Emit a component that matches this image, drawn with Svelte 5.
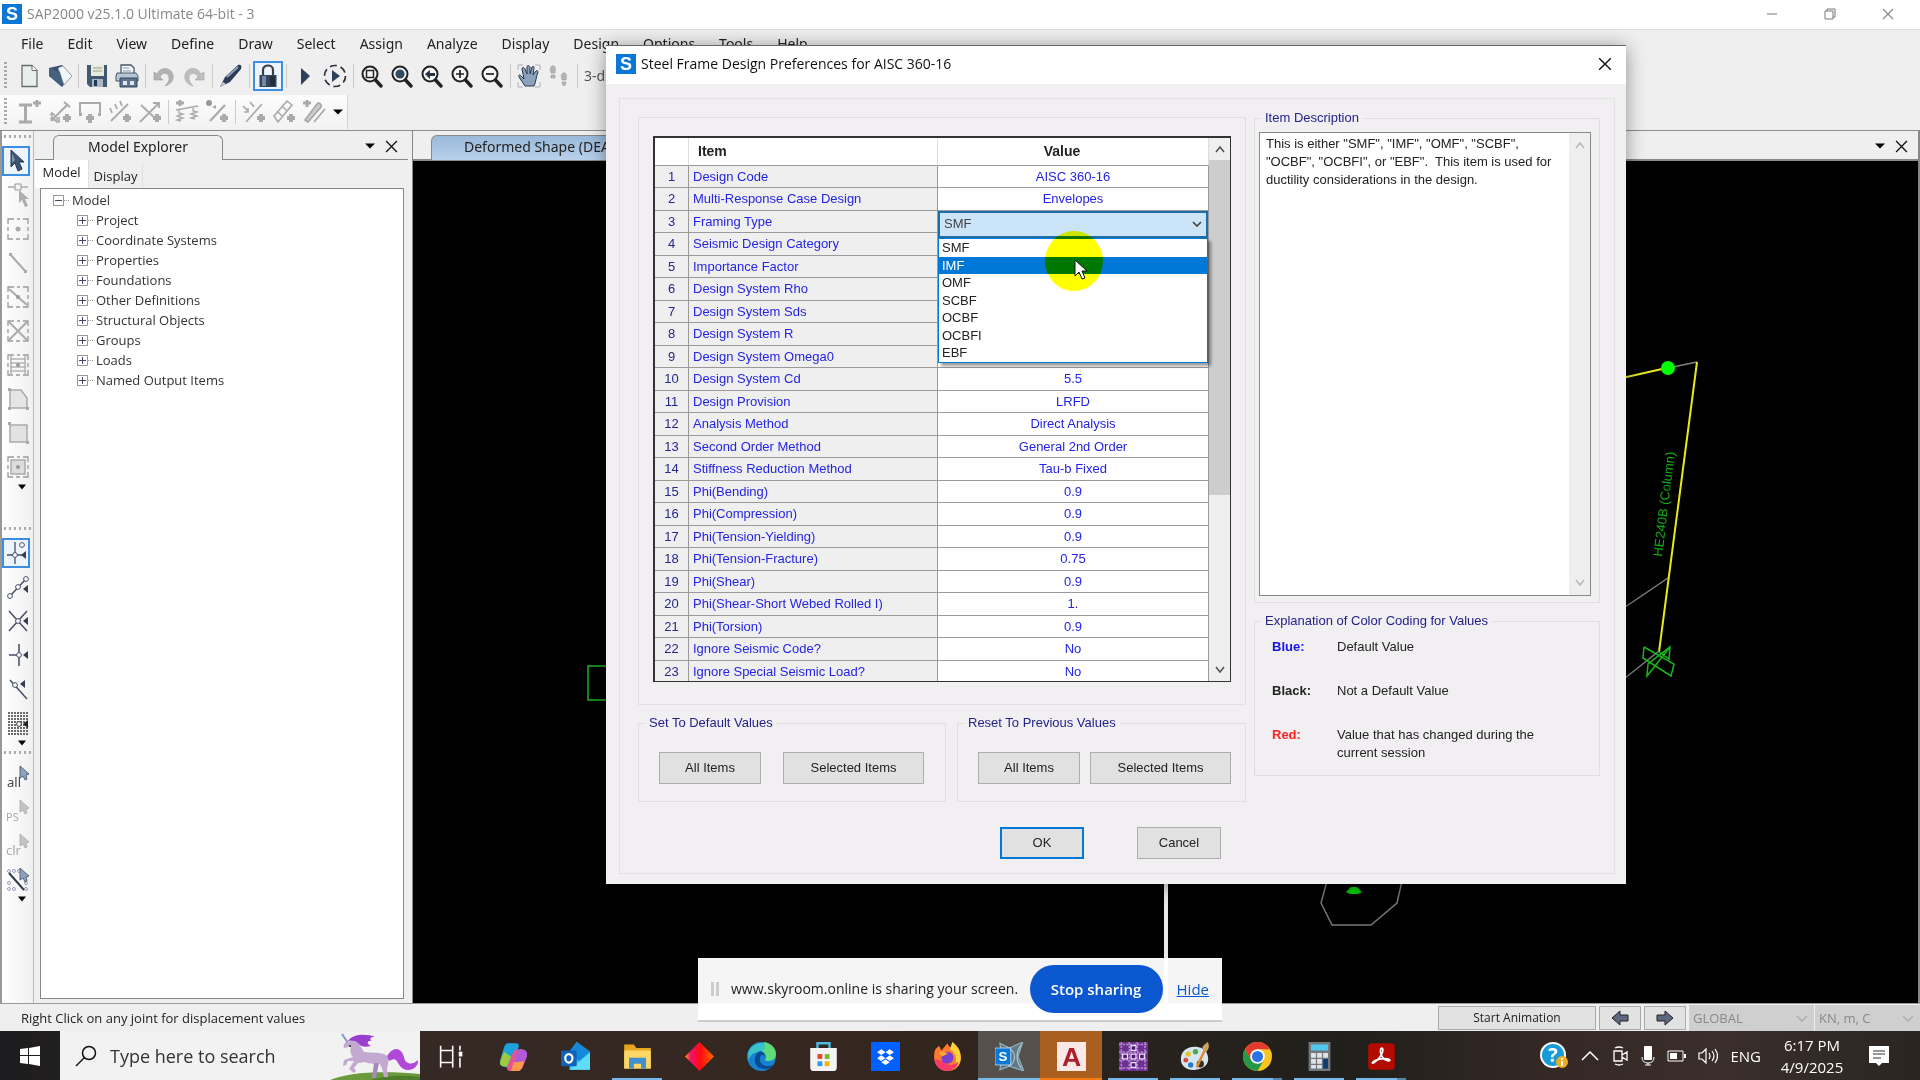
<script lang="ts">
	const menus = ['File', 'Edit', 'View', 'Define', 'Draw', 'Select', 'Assign', 'Analyze', 'Display', 'Design', 'Options', 'Tools', 'Help'];

	const glass = '<circle cx="10" cy="10" r="7.5" fill="#f4f6f8" stroke="#222" stroke-width="2"/><path d="M15.5 16l5.5 6" stroke="#222" stroke-width="3.4" stroke-linecap="round"/>';
	const dashed = '<path d="M2 7V2h6M11 2h3M17 2h5v5M22 10v4M22 17v5h-5M14 22h-4M7 22H2v-5M2 14v-4" fill="none" stroke="#9a9a9a" stroke-width="1.3"/>';
	const pad = '<path d="M19 14v8M15 18h8" stroke="#aaa" stroke-width="4"/>';
	const pick = '<path d="M14 1v12l3-2 2 4 2-1-1-4 3-1z" fill="#8fa3bc" stroke="#3c4d63" stroke-width=".8"/>';
	const pickOff = '<path d="M14 1v12l3-2 2 4 2-1-1-4 3-1z" fill="#c4c4c4" stroke="#aaa" stroke-width=".8"/>';

	const icons: Record<string, string> = {
		fresh: '<path d="M4 1.500h10l5 5v16H4z" fill="#e8eeea" stroke="#666f6b" stroke-width="1.300"/><path d="M14 1.500v5h5" fill="#fff" stroke="#666f6b"/>',
		open: '<path d="M1 4L14 1l10 11-10 11L1 12z" fill="#35506f"/><path d="M10 4l5-2 9 10-8 9z" fill="#f3f6f9" stroke="#7c8ba0" stroke-width=".7"/><path d="M1 4l11 4 3 14L1 12z" fill="#46617f"/>',
		save: '<path d="M2 1h20v22H5l-3-3z" fill="#405872"/><path d="M6 1h13v11H6z" fill="#e7ebdc"/><path d="M8 4h9M8 7h9" stroke="#96a08a"/><path d="M7 15h11v8H7z" fill="#a9b8c8"/><path d="M9 16h3v6H9z" fill="#22364d"/>',
		print: '<path d="M6 9V1h10l3 3v6" fill="#f4f7fa" stroke="#45566b" stroke-width="1.300"/><path d="M8 4h6M8 7h8" stroke="#8594a5"/><path d="M2 9h19l2 3v5H1v-5z" fill="#b9c5d2" stroke="#45566b"/><path d="M5 14h17v9H5z" fill="#5c7290" stroke="#34465c"/><path d="M8 17h4v4H8zM15 17h4v4h-4z" fill="#dfe6ee"/>',
		undo: '<path d="M2 8v8h9l-3-3c2-5 8-5 9 0 .6 3-1 6-4 9 6-2 9-6 8-11-2-8-12-9-16-1z" fill="#b3b3b3" stroke="#999" stroke-width=".6"/>',
		redo: '<path d="M22 8v8h-9l3-3c-2-5-8-5-9 0-.6 3 1 6 4 9-6-2-9-6-8-11C5 3 15 2 19 10z" fill="#bebebe" stroke="#a5a5a5" stroke-width=".6"/>',
		pen: '<path d="M1 23l5-10L19 1c3-1 4 1 3 4L11 18z" fill="#2c3c52"/><path d="M8 13L19 3" stroke="#91a5bc" stroke-width="1.800"/><path d="M1 23l3-5 3 2z" fill="#c5ccd6"/>',
		lock: '<path d="M7 12V6c0-6 10-6 10 0v6" fill="none" stroke="#3a4048" stroke-width="2.200"/><path d="M3.500 11h17v12h-17z" fill="#34445a"/><path d="M6 12h4v10H6z" fill="#7789a0"/><path d="M14 12h5v10h-5z" fill="#222e3f"/>',
		play: '<path d="M8 4l9 8-9 9z" fill="#2c4059"/>',
		runall: '<circle cx="12" cy="12" r="10.500" fill="none" stroke="#2b2f35" stroke-width="1.700" stroke-dasharray="7 4"/><path d="M9 6l8 6-8 6z" fill="#2c4059"/>',
		zoomwin: glass + '<path d="M6.500 6.500h7v7h-7z" fill="none" stroke="#222" stroke-width="1.500"/>',
		zoomfull: glass + '<circle cx="10" cy="10" r="4.600" fill="#35495f"/>',
		zoomback: glass + '<path d="M5 10l5-4v3h5v3h-5v3z" fill="#25313f"/>',
		zoomin: glass + '<path d="M6 10h8M10 6v8" stroke="#222" stroke-width="1.700"/>',
		zoomout: glass + '<path d="M6 10h8" stroke="#222" stroke-width="1.700"/>',
		pan: '<path d="M1 6V1h5M18 1h5v5M23 18v5h-5M6 23H1v-5" fill="none" stroke="#aab3bd"/><path d="M8 22l-6-9c-1-2 1-3 2-1l3 3L5 5c0-2 2-2 3 0l2 5V3c0-2 2-2 3 0v7l2-7c1-1 2-1 2 1l-1 7 3-4c1-1 2 0 2 1-2 5-2 10-4 14z" fill="#8ba1bd" stroke="#28384b"/>',
		walk: '<path d="M5 2c3-1 4 2 3 7H4C3 6 3 3 5 2zM4 11h4v3H4zM16 9c3-1 4 2 3 7h-4c-1-3-1-6 1-7zM15 18h4c0 5-4 5-4 0z" fill="#b5b5b5" stroke="#999" stroke-width=".6"/>',

		section: '<path d="M1 5h13M1 22h13M7.500 5v17" stroke="#aaa" stroke-width="3"/><path d="M19 0v7M15 3h8" stroke="#aaa" stroke-width="3"/>',
		released: '<path d="M3 21L20 4M16 2l6 5" fill="none" stroke="#aaa" stroke-width="2"/><path d="M2 15q3-3 5 1t5 1M2 19q3-3 5 1t5 1M4 12v8h8" fill="none" stroke="#aaa" stroke-width="1.500"/>' + pad,
		portal: '<path d="M2 14V3h20v11" fill="none" stroke="#aaa" stroke-width="2"/><path d="M1 13h3v3H1zM20 13h3v3h-3z" fill="#aaa"/><path d="M12 14v9M8 18h8" stroke="#aaa" stroke-width="4"/>',
		loads: '<path d="M3 21L20 4M2 8l2 5M7 4l2 5M12 1l2 5" stroke="#aaa" stroke-width="1.800"/>' + pad,
		cross: '<path d="M2 22L20 4M3 5l16 15M15 3h6v5" fill="none" stroke="#aaa" stroke-width="1.800"/>' + pad,
		springs: '<path d="M1 10l22-4M4 10v3l4 1-6 2 6 2-6 2 4 1M18 8v3l4 1-6 2 6 2-6 2 4 1" fill="none" stroke="#aaa" stroke-width="1.400"/><path d="M5 0v6M1 3h8" stroke="#aaa" stroke-width="3"/>',
		mass: '<circle cx="4" cy="3" r="3" fill="#999"/><path d="M7 7l4-2v4z" fill="#aaa"/><path d="M5 21L20 5" stroke="#aaa" stroke-width="2.200"/>' + pad,
		arrows: '<path d="M4 22L20 4M1 6l5 5M8 2l4 5M6 8v4H2" fill="none" stroke="#aaa" stroke-width="1.700"/>' + pad,
		strip: '<path d="M2 16L15 1l5 4L6 22zM6 12l4 4M11 7l4 4" fill="none" stroke="#aaa" stroke-width="1.600"/>' + pad,
		pens: '<path d="M3 20L15 4c2-2 5 0 4 3L6 22zM12 22L23 9" fill="#ccc" stroke="#a3a3a3" stroke-width="1.500"/><path d="M5 0v7M1 3h8" stroke="#aaa" stroke-width="3"/>',

		arrow: '<path d="M7 1v17l4-4 3 8 4-2-3-7h5z" fill="#3f5670" stroke="#26374b"/><path d="M8 4v10l3-3z" fill="#8097b1"/>',
		reshape: '<path d="M2 4h20" stroke="#aaa" stroke-width="1.500"/><path d="M9 1h6v6H9z" fill="#f5f5f5" stroke="#999"/><path d="M13 7v13l3-3 3 7 3-1-3-7h4z" fill="#aeaeae"/>',
		joint: dashed + '<circle cx="12" cy="12" r="2.500" fill="#aaa"/>',
		frame: '<path d="M4 3l16 18" stroke="#aaa" stroke-width="2"/><path d="M3 2h3v3H3zM18 19h3v3h-3z" fill="#aaa"/>',
		quickframe: dashed + '<path d="M3 4l18 16" stroke="#aaa" stroke-width="2"/><circle cx="12" cy="12" r="2" fill="#999"/>',
		brace: dashed + '<path d="M3 3l18 18M21 3L3 21" stroke="#aaa" stroke-width="2"/>',
		secondary: dashed + '<path d="M4 6h16M4 10h16M4 14h16M4 18h16M5 3v18M19 3v18" stroke="#b4b4b4" stroke-width="1.500"/><circle cx="12" cy="12" r="2" fill="#999"/>',
		polyarea: '<path d="M4 3h11l6 8v10H4z" fill="#e5e5e5" stroke="#aaa" stroke-width="1.500"/><path d="M2 1h3v3H2zM2 20h3v3H2zM20 20h3v3h-3z" fill="#aaa"/>',
		rectarea: '<path d="M4 4h17v17H4z" fill="#e2e2e2" stroke="#aaa" stroke-width="1.500"/><path d="M2 1h3v3H2zM20 20h3v3h-3z" fill="#aaa"/>',
		quickarea: dashed + '<path d="M5 5h14v14H5z" fill="#ddd" stroke="#aaa" stroke-width="1.500"/><circle cx="12" cy="12" r="2" fill="#999"/>',

		snapjoint: '<path d="M11 1v22M3 14h16" stroke="#454e68" stroke-width="1.300"/><circle cx="11" cy="14" r="2.400" fill="#fff" stroke="#454e68"/><circle cx="18" cy="4" r="2.400" fill="#fff" stroke="#454e68"/><path d="M22 10v8l-5-4z" fill="#333b52"/>',
		snapmid: '<path d="M5 20L20 4" stroke="#454e68" stroke-width="1.500"/><circle cx="4" cy="21" r="2.400" fill="#fff" stroke="#454e68"/><circle cx="12" cy="12" r="2.400" fill="#fff" stroke="#454e68"/><circle cx="20" cy="4" r="2.400" fill="#fff" stroke="#454e68"/><path d="M22 10v8l-5-4z" fill="#333b52"/>',
		snapcross: '<path d="M3 2l18 20M21 2L3 22" stroke="#454e68" stroke-width="1.500"/><circle cx="12" cy="12" r="2.400" fill="#fff" stroke="#454e68"/><path d="M22 8v8l-5-4z" fill="#333b52"/>',
		snapperp: '<path d="M13 1v22M3 12h9" stroke="#454e68" stroke-width="1.500"/><circle cx="13" cy="12" r="2.400" fill="#fff" stroke="#454e68"/><path d="M22 8v8l-5-4z" fill="#333b52"/>',
		snapline: '<path d="M4 3l17 19" stroke="#454e68" stroke-width="1.500"/><circle cx="9" cy="8" r="2.400" fill="#fff" stroke="#454e68"/><path d="M19 3v8l-5-4z" fill="#333b52"/>',
		snapgrid: '<path d="M2 2h21M2 5h21M2 8h21M2 11h21M2 14h21M2 17h21M2 20h21M2 23h21" stroke="#3d3d3d" stroke-width="1.300" stroke-dasharray="2 1"/><circle cx="13" cy="13" r="2.400" fill="#fff" stroke="#333"/><path d="M22 9v8l-5-4z" fill="#222"/>',
		all: '<text x="1" y="22" font-size="13" font-family="Noto Sans, sans-serif" fill="#44484f">all</text>' + pick,
		ps: '<text x="0" y="22" font-size="11" font-family="Noto Sans, sans-serif" fill="#aaa">PS</text>' + pickOff,
		clr: '<text x="0" y="22" font-size="13" font-family="Noto Sans, sans-serif" fill="#aaa">clr</text>' + pickOff,
		picklines: '<g fill="none" stroke="#98a2b5"><circle cx="3" cy="4" r="1.500"/><circle cx="8" cy="4" r="1.500"/><circle cx="13" cy="4" r="1.500"/><circle cx="3" cy="16" r="1.500"/><circle cx="3" cy="22" r="1.500"/><circle cx="8" cy="22" r="1.500"/><circle cx="20" cy="16" r="1.500"/><circle cx="20" cy="22" r="1.500"/></g><path d="M3 6l15 17" stroke="#333c4c" stroke-width="2"/>' + pick,

		taskview: '<path d="M3 3v4M13 3v4M3 7h10v10H3zM3 17v4M13 17v4" fill="none" stroke="#fff" stroke-width="1.300"/><path d="M19 3v4M19 13v8" stroke="#fff" stroke-width="1.300"/><path d="M18 8h3v4h-3z" fill="#fff"/>',
		copilot: '<path d="M8 1h6c2 0 3 1 2 4l-4 12c-1 3-3 4-5 4-5 0-7-2-6-6l3-10c1-3 2-4 4-4z" fill="#1da2dd"/><path d="M4 8l-3 8c-1 4 3 5 6 4l3-8z" fill="#9ccb3c"/><path d="M17 6c5 0 7 2 6 6l-3 8c-1 3-3 4-5 4H9c-2 0-3-2-2-4l5-12c1-1 2-2 5-2z" fill="#e9548f"/><path d="M17 6c5 0 7 2 6 6l-1 3-10 3 3-9c0-2 1-3 2-3z" fill="#b05ad8"/><path d="M12 17l9-1-2 5c-1 2-2 3-4 3h-5z" fill="#ff9a4d"/>',
		outlook: '<path d="M13 0l11 8v15H7V8z" fill="#36c5f4"/><path d="M13 0l11 8-9 8-9-7z" fill="#1489dc"/><path d="M7 23l17-14v14z" fill="#5fdcf8"/><rect x="0" y="7" width="13" height="13" rx="1" fill="#0f62b8"/><ellipse cx="6.500" cy="13.500" rx="3" ry="3.500" fill="none" stroke="#fff" stroke-width="1.800"/>',
		explorer: '<path d="M1 2h8l2 3h12v17H1z" fill="#e7a61c"/><path d="M1 7h22v15H1z" fill="#fcd667"/><path d="M5 13h14v9h-4v-4H9v4H5z" fill="#3f90cf"/>',
		diamond: '<defs><linearGradient id="gem"><stop offset="0" stop-color="#ff9a00"/><stop offset=".2" stop-color="#f0106c"/><stop offset=".55" stop-color="#ff0d0d"/><stop offset="1" stop-color="#ff6b00"/></linearGradient></defs><path d="M12 0l12 12-12 12L0 12z" fill="url(#gem)"/>',
		edge: '<circle cx="12" cy="12" r="12" fill="#1681d0"/><path d="M1 9C4-1 19-3 23 8c2 6-4 9-8 7 2-3 0-7-4-7-5 0-9 3-10 8z" fill="#39c2c9"/><path d="M14 0c6 1 10 5 10 10s-5 7-9 5c2-3 0-6-2-7 2-3 2-5 1-8z" fill="#5ddc79"/><path d="M10 8c-5 3-5 12 2 14 4 1 8 0 10-3-8 3-13-2-11-7 1-2 3-2 4 0 0-3-3-5-5-4z" fill="#0b4990"/>',
		store: '<path d="M7 6V1h10v5" fill="none" stroke="#4db6e2" stroke-width="2"/><path d="M1 5h22v16q0 3-3 3H4q-3 0-3-3z" fill="#f3f3f3"/><path d="M7 10h4v4H7z" fill="#e8472b"/><path d="M13 10h4v4h-4z" fill="#7cb82f"/><path d="M7 16h4v4H7z" fill="#2a9df0"/><path d="M13 16h4v4h-4z" fill="#f4b400"/>',
		dropbox: '<path d="M0 0h24v24H0z" fill="#0061fe"/><path d="M8.500 6l3.500 2.400-3.500 2.400L5 8.400zM15.500 6L19 8.400l-3.500 2.400L12 8.400zM8.500 11l3.500 2.400-3.500 2.400L5 13.400zM15.500 11l3.500 2.400-3.500 2.400-3.500-2.400zM12 14.500l3.500 2.300-3.500 2.300-3.500-2.300z" fill="#fff"/>',
		firefox: '<path d="M2 6l3-3 2 4 5-6c1 3 2 3 4 4V0c4 3 7 7 7 13 0 7-5 11-11 11S1 19 1 13c0-3 0-5 1-7z" fill="#ff7a2c"/><path d="M16 0c4 3 7 7 7 13 0 5-3 8-6 10 4-8 2-14-3-17z" fill="#ffd43a"/><path d="M1 14c1 6 5 10 11 10 6-1 9-4 9-8-3 4-9 4-12 0z" fill="#f63a6a"/><circle cx="12" cy="13" r="5" fill="#7a3fd0"/><path d="M5 8c4-1 5 1 8 2-3 0-4 2-6 2z" fill="#ffa436"/>',
		sap: '<path d="M4 1l8 4 11-5-4 12 5 12-12-4-8 3 2-11z" fill="#5f7884" stroke="#8fb0bd"/><path d="M10 5c8 1 8 13 1 15M22 2c-5 6-5 14 0 20" fill="none" stroke="#aac9d4"/><path d="M0 5h13v14H0z" fill="#0878d8" stroke="#fff" stroke-width=".5"/><text x="6.500" y="16" text-anchor="middle" font-size="11" font-weight="700" font-family="Liberation Sans, sans-serif" fill="#fff">S</text>',
		autocad: '<path d="M0 0h24v24H0z" fill="#fbe9e7"/><text x="12" y="20" text-anchor="middle" font-size="22" font-weight="700" font-family="Liberation Sans, sans-serif" fill="#ad1f2d">A</text>',
		etabs: '<path d="M0 0h24v24H0z" fill="#6d2f92"/><path d="M0 2h24M0 8.500h24M0 15h24M0 21.500h24M2 0v24M8.500 0v24M15 0v24M21.500 0v24" stroke="#b78fd0" stroke-width="1.200" stroke-dasharray="2 1"/><path d="M10 10h4v4h-4zM3 10h4v4H3zM17 10h4v4h-4zM10 3h4v4h-4zM10 17h4v4h-4z" fill="#4b1a6d" stroke="#efe2f6"/>',
		paint: '<path d="M11 4C4 4-1 9 0 16c1 5 6 8 12 7 8-1 12-6 10-12-1-5-6-7-11-7z" fill="#d5e5f1"/><circle cx="6" cy="10" r="2.200" fill="#e2c52b"/><circle cx="12" cy="8" r="2.200" fill="#4ba94a"/><circle cx="4" cy="15" r="2" fill="#d24a3a"/><circle cx="8" cy="19" r="2.200" fill="#2876c9"/><circle cx="16" cy="18" r="3" fill="#362b25"/><path d="M20 6l-7 15" stroke="#e28b2c" stroke-width="2"/><path d="M18 6c-1-3 2-4 4-6 2 3 1 6-1 8z" fill="#c9a169"/>',
		chrome: '<circle cx="12" cy="12" r="12" fill="#f9c51d"/><path d="M1.600 6A12 12 0 0 1 22.400 6H12l-5.200 9z" fill="#e33b2e"/><path d="M1.600 6A12 12 0 0 0 12 24l5.200-9H6.800z" fill="#279847"/><circle cx="12" cy="12" r="6" fill="#fff"/><circle cx="12" cy="12" r="4.600" fill="#2a72e8"/>',
		calc: '<path d="M3 0h18v24H3z" fill="#73787e"/><path d="M5 2h14v5H5z" fill="#4fc9f0"/><path d="M5 9h4v4H5zM10 9h4v4h-4zM15 9h4v4h-4zM5 14h4v4H5zM10 14h4v4h-4zM5 19h4v3H5zM10 19h4v3h-4z" fill="#dfe3e7"/><path d="M15 14h4v8h-4z" fill="#0d3d73"/>',
		acrobat: '<rect x="1" y="1" width="22" height="22" rx="3" fill="#b30b00"/><path d="M12 5c3 0 0 8-6 12-3 2-2-2 6-3 9-1 8 3 4 1-4-1-6-8-4-10z" fill="none" stroke="#fff" stroke-width="1.400"/>'
	};

	const toolbar = ['fresh', 'open', '|', 'save', 'print', '|', 'undo', 'redo', '|', 'pen', '|', 'lock', '|', 'play', 'runall', '|', 'zoomwin', 'zoomfull', 'zoomback', 'zoomin', 'zoomout', '|', 'pan', 'walk', '|'];
	const assignBar = ['section', 'released', 'portal', 'loads', 'cross', '|', 'springs', 'mass', '|', 'arrows', 'strip', 'pens'];
	const sideGroups = [
		['arrow', 'reshape', 'joint', 'frame', 'quickframe', 'brace', 'secondary', 'polyarea', 'rectarea', 'quickarea'],
		['snapjoint', 'snapmid', 'snapcross', 'snapperp', 'snapline', 'snapgrid'],
		['all', 'ps', 'clr', 'picklines']
	];
	const pressed = ['lock', 'arrow', 'snapjoint'];

	const tree = ['Project', 'Coordinate Systems', 'Properties', 'Foundations', 'Other Definitions', 'Structural Objects', 'Groups', 'Loads', 'Named Output Items'];

	const items: [string, string][] = [
		['Design Code', 'AISC 360-16'],
		['Multi-Response Case Design', 'Envelopes'],
		['Framing Type', ''],
		['Seismic Design Category', ''],
		['Importance Factor', ''],
		['Design System Rho', ''],
		['Design System Sds', ''],
		['Design System R', ''],
		['Design System Omega0', ''],
		['Design System Cd', '5.5'],
		['Design Provision', 'LRFD'],
		['Analysis Method', 'Direct Analysis'],
		['Second Order Method', 'General 2nd Order'],
		['Stiffness Reduction Method', 'Tau-b Fixed'],
		['Phi(Bending)', '0.9'],
		['Phi(Compression)', '0.9'],
		['Phi(Tension-Yielding)', '0.9'],
		['Phi(Tension-Fracture)', '0.75'],
		['Phi(Shear)', '0.9'],
		['Phi(Shear-Short Webed Rolled I)', '1.'],
		['Phi(Torsion)', '0.9'],
		['Ignore Seismic Code?', 'No'],
		['Ignore Special Seismic Load?', 'No']
	];
	const framingTypes = ['SMF', 'IMF', 'OMF', 'SCBF', 'OCBF', 'OCBFI', 'EBF'];
	let framing = $state('SMF');
	let hovered = $state('IMF');

	const description = 'This is either "SMF", "IMF", "OMF", "SCBF", "OCBF", "OCBFI", or "EBF".  This item is used for ductility considerations in the design.';

	const apps = [
		{ name: 'taskview' },
		{ name: 'copilot' },
		{ name: 'outlook' },
		{ name: 'explorer', open: true },
		{ name: 'diamond' },
		{ name: 'edge' },
		{ name: 'store' },
		{ name: 'dropbox' },
		{ name: 'firefox' },
		{ name: 'sap', open: true, active: true },
		{ name: 'autocad', alert: true },
		{ name: 'etabs', open: true },
		{ name: 'paint', open: true },
		{ name: 'chrome', open: true, stacked: true },
		{ name: 'calc', open: true },
		{ name: 'acrobat', open: true, stacked: true }
	];
</script>

{#snippet icon(name: string)}
	<svg class="icon" viewBox="0 0 24 24" aria-hidden="true">{@html icons[name]}</svg>
{/snippet}

{#snippet tools(names: string[])}
	{#each names as name}
		{#if name === '|'}
			<span class="sep"></span>
		{:else}
			<button class="tool" class:pressed={pressed.includes(name)} aria-label={name}>{@render icon(name)}</button>
		{/if}
	{/each}
{/snippet}

{#snippet logo()}
	<svg class="logo" viewBox="0 0 20 20" aria-hidden="true">
		<path d="M0 0h20v20H0z" fill="#0a76d6" />
		<text x="10" y="16" font-size="18" font-weight="700" font-family="Liberation Sans, sans-serif" text-anchor="middle" fill="#fff">S</text>
	</svg>
{/snippet}

{#snippet cross(size: number)}
	<svg width={size} height={size} viewBox="0 0 12 12" aria-hidden="true"><path d="M1 1l10 10M11 1L1 11" stroke="currentColor" stroke-width="1.2" /></svg>
{/snippet}

{#snippet chevron(d: string)}
	<svg width="12" height="12" viewBox="0 0 12 12" aria-hidden="true"><path {d} fill="none" stroke="currentColor" stroke-width="1.6" /></svg>
{/snippet}

<div class="desktop">
	<header class="titlebar">
		{@render logo()}
		<span class="title">SAP2000 v25.1.0 Ultimate 64-bit - 3</span>
		<button class="win" aria-label="Minimize"><svg width="12" height="12"><path d="M1 6h10" stroke="#777" /></svg></button>
		<button class="win" aria-label="Restore"><svg width="12" height="12"><path d="M1 3h8v8H1zM3 3V1h8v8H9" fill="none" stroke="#777" /></svg></button>
		<button class="win" aria-label="Close">{@render cross(12)}</button>
	</header>

	<nav class="menubar">
		{#each menus as menu}
			<button>{menu}</button>
		{/each}
	</nav>

	<div class="toolbar">
		<span class="grip"></span>
		{@render tools(toolbar)}
		<button class="view3d">3-d</button>
	</div>
	<div class="toolbar">
		<div class="strip">
			<span class="grip"></span>
			{@render tools(assignBar)}
			<span class="caret"></span>
		</div>
	</div>

	<main>
		<aside class="side">
			{#each sideGroups as group}
				<div class="side-group">
					<span class="side-grip"></span>
					{@render tools(group)}
					<span class="caret"></span>
				</div>
			{/each}
		</aside>

		<section class="explorer">
			<div class="pane-tabs">
				<span class="edge"></span>
				<span class="pane-tab">Model Explorer</span>
				<span class="pane-end"><span class="caret"></span>{@render cross(13)}</span>
			</div>
			<div class="subtabs">
				<button class="on">Model</button>
				<button>Display</button>
			</div>
			<ul class="tree">
				<li class="root"><span class="box minus"></span><span class="link"></span>Model</li>
				{#each tree as node}
					<li><span class="box plus"></span><span class="link"></span>{node}</li>
				{/each}
			</ul>
		</section>

		<section class="views">
			<div class="pane-tabs">
				<span class="edge"></span>
				<span class="pane-tab blue">Deformed Shape (DEAD)</span>
				<span class="pane-end"><span class="caret"></span>{@render cross(13)}</span>
			</div>
			<svg class="canvas" viewBox="413 160 1505 842" preserveAspectRatio="xMinYMin slice">
				<path d="M620 665h-32v34h32" fill="none" stroke="#1cb81c" stroke-width="1.500" />
				<path d="M1600 623l68-46M1600 697l59-47M1668 367l29-6" fill="none" stroke="#808080" stroke-width="1.500" />
				<path d="M1600 382l62-14M1697 361l-38 290" fill="none" stroke="#e8e81c" stroke-width="2" />
				<circle cx="1668" cy="367" r="7" fill="#0f0" />
				<path d="M1644 646l-1 11 28 18 3-12-30-17M1670 646l-23 29 1-12 22-17-1 12-11-8" fill="none" stroke="#18b818" stroke-width="1.500" />
				<path d="M1327 880l-6 22 11 22h39l26-22 5-22" fill="none" stroke="#777" stroke-width="1.500" />
				<path d="M1346 891l5-5h6l5 5-4 2h-8z" fill="#0c0" />
				<path d="M1166 880v122" stroke="#e8e8e8" stroke-width="4" />
				<text class="member" transform="translate(1662 556) rotate(-83)">HE240B (Column)</text>
			</svg>
		</section>
	</main>

	<footer class="status">
		<span class="hint">Right Click on any joint for displacement values</span>
		<button class="anim">Start Animation</button>
		<button class="step" aria-label="Previous"><svg width="18" height="16" viewBox="0 0 18 16"><path d="M1 8l8-7v4h8v6H9v4z" fill="#5b6880" stroke="#222" /></svg></button>
		<button class="step" aria-label="Next"><svg width="18" height="16" viewBox="0 0 18 16"><path d="M17 8L9 1v4H1v6h8v4z" fill="#5b6880" stroke="#222" /></svg></button>
		<div class="units">
			<label class="unit wide">
				<select disabled aria-label="Coordinate system"><option>GLOBAL</option></select>
				{@render chevron('M1 4l5 5 5-5')}
			</label>
			<label class="unit">
				<select disabled aria-label="Units"><option>KN, m, C</option></select>
				{@render chevron('M1 4l5 5 5-5')}
			</label>
		</div>
	</footer>

	<div class="taskbar">
		<button class="start" aria-label="Start">
			<svg width="20" height="20" viewBox="0 0 20 20"><path d="M0 3l8-1v7H0zM9 2l11-2v9H9zM0 10h8v8l-8-1zM9 10h11v10L9 18z" fill="#fff" /></svg>
		</button>
		<label class="search">
			<svg width="22" height="22" viewBox="0 0 22 22"><circle cx="14" cy="8" r="6.500" fill="none" stroke="#111" stroke-width="1.500" /><path d="M9.500 12.500L1 21" stroke="#111" stroke-width="1.500" /></svg>
			<input type="text" placeholder="Type here to search" aria-label="Type here to search" />
			<svg class="unicorn" viewBox="0 0 92 48" aria-hidden="true">
				<path d="M0 48c20-10 60-10 92-7v7z" fill="#6a9a3c" />
				<path d="M40 48c16-6 36-6 52-4v4z" fill="#4e7d2c" />
				<path d="M14 1l6 9" stroke="#7f98c4" stroke-width="2" />
				<path d="M19 9c5-2 9-1 12 2l5 8c7 1 14 0 20 2 4 2 5 5 4 10l-1 5 1 8h-4l-2-9-3-5c-4 1-10 1-14-1l-7 1-4 5 2 3-2 2-5-4 5-8h-6l-2 4-3 1 1-6 9-3c-3-3-3-7-2-11l-6 2c-3-1-1-4 1-6z" fill="#c3a9cf" />
				<path d="M51 30l-3 15h-4l2-15z" fill="#a68ab8" />
				<path d="M20 8c5-8 20-7 27-4-5 0-6 2-3 4-5-1-6 3-1 5-5 1-9 1-11-1-3-4-7-5-12-4z" fill="#9a3fd0" />
				<path d="M59 23c6-10 14-9 17 1 1 7 8 9 14 3 1 9-12 14-18 6-4-5-3-9-11-5z" fill="#b048d8" />
				<circle cx="22" cy="13" r="1" fill="#222" />
			</svg>
		</label>
		{#each apps as app}
			<button class="app" class:open={app.open} class:active={app.active} class:alert={app.alert} class:stacked={app.stacked} aria-label={app.name}>
				{@render icon(app.name)}
			</button>
		{/each}
		<div class="tray">
			<svg width="30" height="28" viewBox="0 0 30 28"><circle cx="14" cy="13" r="13" fill="#fff" /><circle cx="14" cy="13" r="11" fill="#159bd7" /><text x="14" y="20" text-anchor="middle" font-size="20" font-weight="700" font-family="Open Sans, sans-serif" fill="#fff">?</text><circle cx="23" cy="20" r="6" fill="#efac1f" /><path d="M23 19v5M23 16v2" stroke="#fff" stroke-width="2" /></svg>
			<svg width="18" height="10" viewBox="0 0 18 10"><path d="M1 9l8-8 8 8" fill="none" stroke="#fff" stroke-width="1.500" /></svg>
			<svg width="18" height="20" viewBox="0 0 18 20"><path d="M3 5h8v10H3zM11 9l5-3v8l-5-3M4 2q4-2 8 0M4 18q4 2 8 0" fill="none" stroke="#fff" stroke-width="1.300" /></svg>
			<svg width="14" height="20" viewBox="0 0 14 20"><rect x="3" y="0" width="8" height="14" rx="1" fill="#fff" /><path d="M1 11q0 6 6 6t6-6M7 17v2M4 19h6" fill="none" stroke="#fff" /></svg>
			<svg width="19" height="12" viewBox="0 0 19 12"><path d="M1 1h15v10H1z" fill="none" stroke="#fff" /><path d="M17 4h2v4h-2zM3 3h7v6H3z" fill="#fff" /></svg>
			<svg width="20" height="16" viewBox="0 0 20 16"><path d="M1 5h3l4-4v14l-4-4H1zM11 5q2 3 0 6M14 3q4 5 0 10M17 1q5 7 0 14" fill="none" stroke="#fff" stroke-width="1.200" /></svg>
			<span>ENG</span>
			<div class="clock"><span>6:17 PM</span><span>4/9/2025</span></div>
			<svg width="20" height="20" viewBox="0 0 20 20"><path d="M0 0h20v17h-7l-3 3-3-3H0z" fill="#fff" /><path d="M4 5h12M4 8h12M4 12h8" stroke="#333" /></svg>
		</div>
	</div>

	<div class="dialog" role="dialog" aria-label="Steel Frame Design Preferences">
		<header class="dialog-title">
			{@render logo()}
			<span class="title">Steel Frame Design Preferences for AISC 360-16</span>
			<button class="win" aria-label="Close dialog">{@render cross(14)}</button>
		</header>
		<div class="dialog-body">
			<div class="frame">
				<div class="left">
					<div class="grid-group">
						<div class="grid">
							<table>
								<thead>
									<tr><th class="num"></th><th class="item">Item</th><th class="value">Value</th></tr>
								</thead>
								<tbody>
									{#each items as [name, value], i}
										<tr>
											<td class="num">{i + 1}</td>
											<td class="item">{name}</td>
											<td class="value">
												{#if name === 'Framing Type'}
													<div class="combo">
														<select bind:value={framing} aria-label="Framing Type">
															{#each framingTypes as type}
																<option>{type}</option>
															{/each}
														</select>
														{@render chevron('M2 4l4 4 4-4')}
														<ul class="options">
															{#each framingTypes as type}
																<li class:hovered={hovered === type} onmouseenter={() => (hovered = type)}>{type}</li>
															{/each}
														</ul>
														<span class="halo"></span>
														<svg class="pointer" width="14" height="22" viewBox="0 0 14 22"><path d="M1 1v16l4-4 3 7 3-1-3-7h5z" fill="#fff" stroke="#111" /></svg>
													</div>
												{:else}
													{value}
												{/if}
											</td>
										</tr>
									{/each}
								</tbody>
							</table>
							<div class="scroll">
								<span class="end">{@render chevron('M2 9l4-5 4 5')}</span>
								<span class="thumb"></span>
								<span class="end">{@render chevron('M2 3l4 5 4-5')}</span>
							</div>
						</div>
					</div>

					<div class="sets">
						<fieldset class="defaults">
							<legend>Set To Default Values</legend>
							<div class="buttons">
								<button class="btn all">All Items</button>
								<button class="btn selected">Selected Items</button>
							</div>
						</fieldset>
						<fieldset class="previous">
							<legend>Reset To Previous Values</legend>
							<div class="buttons">
								<button class="btn all">All Items</button>
								<button class="btn selected">Selected Items</button>
							</div>
						</fieldset>
					</div>

					<div class="actions">
						<button class="btn primary">OK</button>
						<button class="btn">Cancel</button>
					</div>
				</div>

				<div class="right">
					<fieldset class="about">
						<legend>Item Description</legend>
						<div class="note">
							<textarea readonly aria-label="Item Description" value={description}></textarea>
							<div class="note-scroll">
								{@render chevron('M2 9l4-5 4 5')}
								{@render chevron('M2 3l4 5 4-5')}
							</div>
						</div>
					</fieldset>
					<fieldset class="colors">
						<legend>Explanation of Color Coding for Values</legend>
						<dl>
							<dt class="is-blue">Blue:</dt>
							<dd>Default Value</dd>
							<dt>Black:</dt>
							<dd>Not a Default Value</dd>
							<dt class="is-red">Red:</dt>
							<dd>Value that has changed during the current session</dd>
						</dl>
					</fieldset>
				</div>
			</div>
		</div>
	</div>

	<div class="sharing">
		<span class="bars"></span>
		<span>www.skyroom.online is sharing your screen.</span>
		<button>Stop sharing</button>
		<a href="#hide">Hide</a>
	</div>
</div>

<style>
	:global(body) {
		margin: 0;
		background: #000;
	}

	.desktop {
		--ui: 'Noto Sans', 'Open Sans', sans-serif;
		--small: 13px/18px 'Open Sans', 'Noto Sans', sans-serif;
		--form: 'Liberation Sans', Arial, sans-serif;
		position: relative;
		display: flex;
		flex-direction: column;
		min-height: 100vh;
		overflow: hidden;
		background: #f0eff0;
		color: #222;
		font: 14px/18px var(--ui);
	}

	.desktop * {
		box-sizing: border-box;
	}

	button,
	select,
	input,
	textarea {
		font: inherit;
		color: inherit;
		padding: 0;
		margin: 0;
		border: 0;
		border-radius: 0;
		background: none;
	}

	svg {
		flex: none;
	}

	.icon {
		display: block;
		width: 24px;
		height: 24px;
	}

	.logo {
		width: 20px;
		height: 20px;
	}

	/* main window chrome */
	.titlebar {
		display: flex;
		align-items: center;
		height: 30px;
		padding: 0 3px 2px 2px;
		background: #fff;
		border-bottom: 1px solid #ddd;
		color: #888;
		font: 14px/20px 'Open Sans', sans-serif;
	}

	.title {
		flex: 1;
		padding-left: 5px;
	}

	.win {
		display: flex;
		align-items: center;
		justify-content: center;
		width: 58px;
		height: 28px;
	}

	.menubar {
		display: flex;
		align-items: center;
		height: 28px;
		padding-left: 9px;
		font-size: 14px;
	}

	.menubar button {
		padding: 0 12px;
	}

	.toolbar {
		display: flex;
		align-items: center;
		height: 36px;
	}

	.toolbar > .grip {
		margin-left: 4px;
	}

	.strip {
		display: flex;
		align-items: center;
		width: 348px;
		height: 34px;
		background: linear-gradient(#fcfcfc, #f2f2f2);
		border-right: 1px solid #d4d4d4;
	}

	.strip .grip {
		margin-left: 4px;
	}

	.grip {
		width: 3px;
		height: 28px;
		margin-right: 8px;
		background: repeating-linear-gradient(#aaa 0 2px, transparent 2px 4px);
	}

	.tool {
		display: flex;
		flex: none;
		align-items: center;
		justify-content: center;
		width: 30px;
		height: 30px;
	}

	.pressed {
		border: 2px solid #3c8fe0;
		background: #eef4fb;
	}

	.sep {
		flex: none;
		width: 1px;
		height: 24px;
		margin: 0 3px;
		background: #ccc;
	}

	.view3d {
		padding-left: 3px;
		color: #555;
	}

	.caret {
		flex: none;
		width: 10px;
		height: 10px;
		background: linear-gradient(#000, #000);
		clip-path: polygon(0 25%, 100% 25%, 50% 75%);
	}

	.strip .caret {
		margin-left: 4px;
	}

	main {
		flex: 1;
		display: flex;
		min-height: 0;
		border-top: 1px solid #8c8c8c;
	}

	.side {
		width: 34px;
		padding: 4px 2px 0;
		border-left: 2px solid #999;
		border-right: 1px solid #bbb;
		background: linear-gradient(90deg, #fff, #f0f0f0);
	}

	.side-group {
		display: flex;
		flex-direction: column;
		align-items: flex-start;
	}

	.side-group:first-child {
		margin-bottom: 32px;
	}

	.side-grip {
		width: 28px;
		height: 3px;
		margin-bottom: 8px;
		background: repeating-linear-gradient(90deg, #aaa 0 2px, transparent 2px 5px);
	}

	.side .tool {
		width: 28px;
		margin-bottom: 4px;
	}

	.side .pressed {
		margin-left: -2px;
	}

	.side .caret {
		width: 8px;
		margin: -4px 0 3px 14px;
	}

	/* panes */
	.pane-tabs {
		display: flex;
		height: 29px;
		align-items: flex-end;
	}

	.edge {
		width: 18px;
		border-bottom: 1px solid #888;
	}

	.pane-tab {
		width: 170px;
		height: 25px;
		padding-top: 2px;
		border: 1px solid #888;
		border-bottom: 0;
		border-radius: 6px 6px 0 0;
		text-align: center;
	}

	.blue {
		width: 260px;
		padding-left: 32px;
		text-align: left;
		background: linear-gradient(#9ab9da, #b9d0ea);
	}

	.pane-end {
		flex: 1;
		display: flex;
		align-items: center;
		justify-content: flex-end;
		gap: 10px;
		height: 25px;
		padding: 0 10px 2px 0;
		border-bottom: 1px solid #888;
		color: #111;
	}

	.explorer {
		display: flex;
		flex-direction: column;
		width: 379px;
		padding: 0 4px 4px 1px;
		border-right: 1px solid #888;
	}

	.subtabs {
		display: flex;
		align-items: flex-end;
		height: 28px;
		font: var(--small);
	}

	.subtabs button {
		width: 54px;
		height: 24px;
		border-right: 1px solid #ddd;
		text-align: center;
	}

	.subtabs .on {
		height: 28px;
		padding-bottom: 4px;
		background: #fff;
	}

	.tree {
		flex: 1;
		margin: 0 4px 0 5px;
		padding: 1px 0 0 36px;
		border: 1px solid #888;
		background: #fff;
		list-style: none;
		font: var(--small);
	}

	.tree li {
		display: flex;
		align-items: center;
		height: 20px;
		color: #333;
	}

	.tree .root {
		margin-left: -24px;
	}

	.box {
		width: 11px;
		height: 11px;
		border: 1px solid #999;
		background: linear-gradient(#446, #446) center / 7px 1px no-repeat;
	}

	.plus {
		background:
			linear-gradient(#446, #446) center / 7px 1px no-repeat,
			linear-gradient(#446, #446) center / 1px 7px no-repeat;
	}

	.link {
		width: 5px;
		margin-right: 3px;
		border-top: 1px dotted #999;
	}

	.views {
		flex: 1;
		display: flex;
		flex-direction: column;
		min-width: 0;
		border-right: 2px solid #888;
	}

	.canvas {
		flex: 1;
		width: 100%;
		min-height: 0;
		height: 0;
		border-top: 1px solid #888;
		background: #000;
	}

	.member {
		fill: #12b012;
		font: 13px 'Liberation Sans', sans-serif;
	}

	/* status bar */
	.status {
		display: flex;
		align-items: center;
		height: 28px;
		gap: 3px;
		border-top: 1px solid #999;
		font: var(--small);
	}

	.hint {
		flex: 1;
		padding-left: 21px;
	}

	.anim,
	.step {
		display: flex;
		align-items: center;
		justify-content: center;
		width: 42px;
		height: 24px;
		border: 1px solid #aaa;
		background: #e2e2e2;
	}

	.anim {
		width: 158px;
		font-size: 12px;
	}

	.units {
		display: flex;
		gap: 1px;
	}

	.unit {
		display: flex;
		align-items: center;
		width: 105px;
		height: 26px;
		padding: 0 6px 0 4px;
		background: #cfcfcf;
		color: #b0b0b0;
	}

	.wide {
		width: 125px;
	}

	.unit select {
		flex: 1;
		min-width: 0;
		appearance: none;
		color: #888;
		opacity: 1;
	}

	/* taskbar */
	.taskbar {
		display: flex;
		height: 50px;
		background: linear-gradient(90deg, #1d1c1e, #352925 22%, #35271f 45%, #201f1b 70%, #332823 80%, #3a2f2a 90%, #2a2521);
		color: #fff;
		font: 15px/22px 'Open Sans', sans-serif;
	}

	.start {
		display: flex;
		align-items: center;
		justify-content: center;
		width: 60px;
	}

	.search {
		display: flex;
		align-items: center;
		width: 360px;
		padding-left: 15px;
		background: #f2f2f2;
		color: #222;
		font-size: 18px;
	}

	.search input {
		flex: 1;
		min-width: 0;
		padding-left: 13px;
	}

	.search input::placeholder {
		color: #333;
		opacity: 1;
	}

	.unicorn {
		align-self: flex-end;
		width: 92px;
		height: 48px;
	}

	.app {
		display: flex;
		flex: none;
		align-items: center;
		justify-content: center;
		width: 62px;
	}

	.app .icon {
		width: 29px;
		height: 29px;
	}

	.open {
		background: linear-gradient(#76b9ed, #76b9ed) bottom / 50px 3px no-repeat;
	}

	.stacked {
		background:
			linear-gradient(90deg, #76b9ed 41px, #5587ad 41px) bottom / 50px 3px no-repeat;
	}

	.active {
		background: linear-gradient(#76b9ed, #76b9ed) bottom / 100% 3px no-repeat #56504d;
	}

	.alert {
		background: linear-gradient(#f77a12, #f77a12) bottom / 100% 3px no-repeat #aa5f21;
	}

	.tray {
		flex: 1;
		display: flex;
		align-items: center;
		justify-content: flex-end;
		gap: 12px;
		padding-right: 31px;
	}

	.clock {
		display: flex;
		flex-direction: column;
		width: 78px;
		margin-right: 6px;
		text-align: center;
	}

	/* preferences dialog */
	.dialog {
		position: absolute;
		top: 45px;
		left: 606px;
		width: 1020px;
		border-top: 1px solid #666;
		background: #f1eff1;
		box-shadow: 0 2px 18px rgba(0, 0, 0, 0.4);
		font: 13px/18px var(--form);
	}

	.dialog-title {
		display: flex;
		align-items: center;
		height: 38px;
		padding: 0 0 3px 10px;
		background: #fff;
		color: #111;
		font: 14px/20px 'Open Sans', sans-serif;
	}

	.dialog-title .win {
		width: 42px;
	}

	.dialog-body {
		padding: 14px 11px 10px 13px;
	}

	.frame {
		display: grid;
		grid-template-columns: 1fr 346px;
		gap: 8px;
		padding: 11px 14px 14px 18px;
		border: 1px solid #e2e2e2;
	}

	.left,
	.right {
		display: flex;
		flex-direction: column;
		gap: 10px;
	}

	.grid-group {
		height: 588px;
		margin-top: 7px;
		padding: 18px 14px;
		border: 1px solid #e0e0e0;
	}

	.grid {
		display: flex;
		height: 546px;
		overflow: hidden;
		border: 2px solid #333;
		border-right-width: 1px;
		border-bottom-width: 1px;
		background: #fff;
	}

	table {
		flex: 1;
		align-self: flex-start;
		border-collapse: separate;
		border-spacing: 0;
		table-layout: fixed;
	}

	th,
	td {
		height: 22px;
		padding: 0;
		border-right: 1px solid #999;
		border-bottom: 1px solid #999;
		line-height: 20px;
	}

	tbody tr:nth-child(even) td {
		height: 23px;
	}

	th {
		height: 28px;
		padding-bottom: 2px;
		border-right-color: #ddd;
		color: #222;
		font-size: 14px;
	}

	.num {
		width: 34px;
		text-align: center;
	}

	td.num {
		background: #f0eff0;
		color: #26268c;
	}

	.item {
		width: 249px;
		padding-left: 4px;
		text-align: left;
	}

	th.item {
		padding-left: 9px;
	}

	td.item {
		background: #f0eff0;
		color: #2424e6;
	}

	.value {
		text-align: center;
	}

	th.value {
		padding-right: 22px;
	}

	td.value {
		color: #2424e6;
	}

	.combo {
		position: relative;
		display: flex;
		align-items: center;
		height: 27px;
		margin: -2px 0 -7px;
		padding: 0 3px 0 4px;
		border: 2px solid #1e6fa8;
		background: #cce4f7;
		color: #444;
	}

	.combo select {
		flex: 1;
		appearance: none;
	}

	.options {
		position: absolute;
		z-index: 1;
		top: 25px;
		left: -2px;
		right: -2px;
		margin: 0;
		padding: 0;
		border: 1px solid #0078d7;
		background: #fff;
		box-shadow: 3px 3px 3px rgba(0, 0, 0, 0.4);
		color: #222;
		list-style: none;
		text-align: left;
	}

	.options li {
		height: 17px;
		padding-left: 3px;
		line-height: 17px;
	}

	.options li:nth-child(odd) {
		height: 18px;
	}

	.options .hovered {
		background: #0078d7;
		color: #fff;
	}

	.halo {
		position: absolute;
		z-index: 2;
		top: 18px;
		left: 105px;
		width: 58px;
		height: 60px;
		border-radius: 50%;
		background: #ff0;
		mix-blend-mode: multiply;
	}

	.pointer {
		position: absolute;
		z-index: 3;
		top: 46px;
		left: 134px;
	}

	.scroll {
		display: flex;
		flex-direction: column;
		width: 21px;
		background: #f0eff0;
		color: #555;
	}

	.end {
		display: flex;
		align-items: center;
		justify-content: center;
		height: 22px;
	}

	.thumb {
		height: 335px;
		margin-bottom: auto;
		background: #cdcdcd;
	}

	fieldset {
		min-width: 0;
		margin: 0;
		padding: 0;
		border: 1px solid #dfdfdf;
	}

	legend {
		margin-left: 6px;
		padding: 0 4px;
		color: #22228c;
		line-height: 16px;
	}

	.sets {
		display: grid;
		grid-template-columns: 308px 1fr;
		gap: 11px;
	}

	.buttons {
		display: flex;
		gap: 22px;
		padding: 21px 13px 17px 20px;
	}

	.previous .buttons {
		gap: 10px;
	}

	.btn {
		width: 84px;
		height: 32px;
		border: 1px solid #adadad;
		background: #e1e1e1;
		text-align: center;
	}

	.all {
		width: 102px;
	}

	.selected {
		width: 141px;
	}

	.primary {
		border: 2px solid #0078d7;
	}

	.actions {
		display: flex;
		justify-content: flex-end;
		gap: 53px;
		margin-top: 15px;
		padding-right: 25px;
	}

	.about > .note {
		display: flex;
		height: 464px;
		margin: 6px 8px 6px 4px;
		border: 1px solid #888;
		background: #fff;
	}

	.note textarea {
		flex: 1;
		min-width: 0;
		padding: 2px 6px;
		line-height: 18px;
		resize: none;
		outline: 0;
		overflow: hidden;
	}

	.note-scroll {
		display: flex;
		flex-direction: column;
		align-items: center;
		justify-content: space-between;
		width: 21px;
		padding: 6px 0;
		background: #f0eff0;
		color: #bbb;
	}

	dl {
		display: grid;
		grid-template-columns: 65px 1fr;
		row-gap: 26px;
		margin: 0;
		padding: 9px 40px 13px 17px;
		color: #222;
	}

	dt {
		font-weight: 700;
	}

	dd {
		margin: 0;
	}

	.is-blue {
		color: #1414ee;
	}

	.is-red {
		color: #f22;
	}

	/* screen sharing notice */
	.sharing {
		position: absolute;
		left: 698px;
		bottom: 59px;
		display: flex;
		align-items: center;
		width: 524px;
		height: 64px;
		padding: 0 13px;
		border-bottom: 2px solid #ccc;
		background: rgba(255, 255, 255, 0.96);
		color: #222;
		font: 14px/20px 'Open Sans', sans-serif;
		white-space: nowrap;
	}

	.bars {
		flex: none;
		width: 8px;
		height: 14px;
		margin-right: 12px;
		border: solid #ccc;
		border-width: 0 3px;
	}

	.sharing button {
		flex: none;
		width: 133px;
		height: 48px;
		margin: 0 14px 0 auto;
		border-radius: 24px;
		background: #0b57d0;
		color: #fff;
		font-size: 15px;
		font-weight: 600;
	}

	.sharing a {
		color: #0b57d0;
		font-size: 15px;
	}
</style>
